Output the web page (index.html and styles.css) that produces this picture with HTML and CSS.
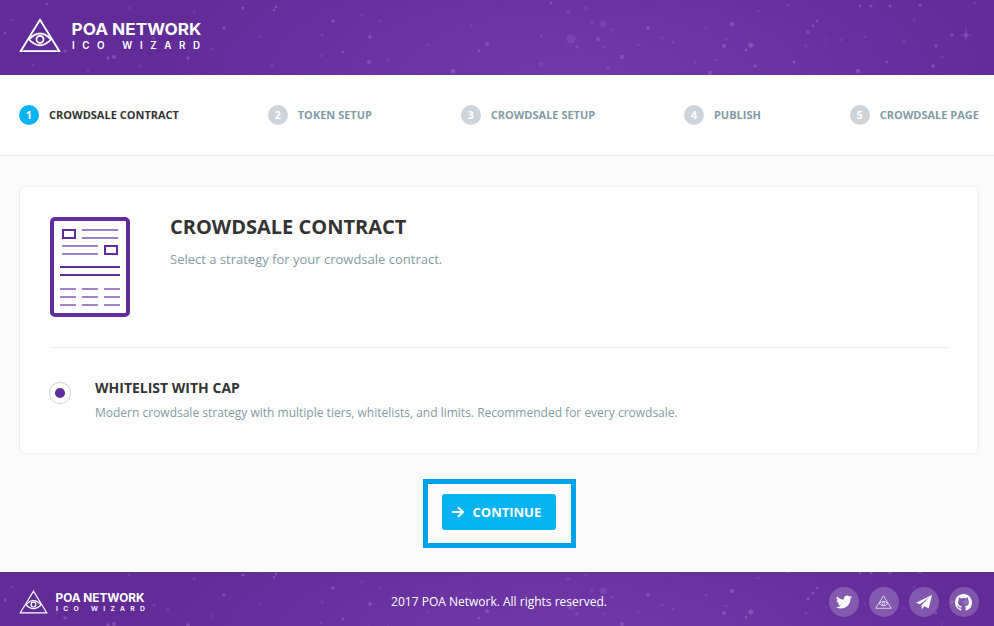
FILE: index.html
```
<!DOCTYPE html>
<html lang="en">
<head>
<meta charset="utf-8">
<title>POA Network ICO Wizard</title>
<link rel="stylesheet" href="styles.css">
</head>
<body>
<svg class="defs" width="0" height="0" aria-hidden="true">
  <symbol id="eye" viewBox="0 0 42 35">
    <g fill="none" stroke="#fff" stroke-width="1.800">
      <path d="M21 1.800 40.300 33.200H1.700Z"/>
      <path d="M10 21.500Q21 9.500 32 21.500Q21 33 10 21.500Z"/>
      <circle cx="21" cy="21.300" r="3.500"/>
    </g>
  </symbol>
  <symbol id="stars" viewBox="0 0 994 75">
    <g fill="#b58add">
      <g opacity=".34">
        <circle cx="47" cy="4" r="1.300"/><circle cx="65" cy="51" r="1.800"/><circle cx="108" cy="58" r="1.700"/><circle cx="114" cy="57" r="2"/><circle cx="188" cy="58" r="1.800"/><circle cx="224" cy="28" r="1.500"/><circle cx="243" cy="8" r="1.600"/><circle cx="5" cy="33" r="1.400"/><circle cx="276" cy="7" r="1.500"/><circle cx="274" cy="10" r="1.200"/><circle cx="333" cy="21" r="1.800"/><circle cx="370" cy="37" r="1.800"/><circle cx="369" cy="62" r="1.900"/><circle cx="343" cy="52" r="1.500"/><circle cx="487" cy="44" r="2"/><circle cx="479" cy="51" r="1.400"/><circle cx="453" cy="71" r="2.300"/><circle cx="551" cy="3" r="1.500"/><circle cx="598" cy="39" r="1.900"/><circle cx="622" cy="57" r="2"/><circle cx="648" cy="28" r="1.900"/><circle cx="732" cy="24" r="2.200"/><circle cx="751" cy="45" r="2.600"/><circle cx="724" cy="46" r="2"/><circle cx="746" cy="50" r="1.500"/><circle cx="755" cy="66" r="1.700"/><circle cx="710" cy="73" r="2"/><circle cx="808" cy="32" r="1.700"/><circle cx="813" cy="26" r="1.400"/><circle cx="817" cy="21" r="1.400"/><circle cx="858" cy="71" r="2.300"/><circle cx="933" cy="66" r="1.900"/><circle cx="920" cy="5" r="1.500"/><circle cx="871" cy="6" r="1.600"/><circle cx="860" cy="6" r="1.500"/><circle cx="890" cy="6" r="1.600"/><circle cx="794" cy="62" r="1.700"/><circle cx="887" cy="62" r="1.400"/><circle cx="936" cy="46" r="1.500"/><circle cx="952" cy="35" r="1.500"/><circle cx="966" cy="35" r="2.200"/>
        <path d="M966 26l.7 8.300 6.300.7-6.300.7-.7 8.300-.7-8.300-6.300-.7 6.300-.7ZM370 31l.5 5.500 3.500.5-3.500.5-.5 4.500-.5-4.500-3.500-.5 3.500-.5ZM369 56l.5 5.500 3.500.5-3.500.5-.5 4.500-.5-4.500-3.500-.5 3.500-.5Z"/>
      </g>
      <g opacity=".18">
        <circle cx="571" cy="39" r="4.500"/><circle cx="603" cy="24" r="3.500"/><circle cx="568" cy="12" r="2"/><circle cx="586" cy="8" r="1.500"/><circle cx="592" cy="23" r="1.500"/><circle cx="612" cy="30" r="1.500"/><circle cx="577" cy="47" r="2"/><circle cx="604" cy="47" r="1.500"/><circle cx="541" cy="36" r="1.500"/><circle cx="541" cy="64" r="2"/><circle cx="608" cy="68" r="1.800"/><circle cx="638" cy="45" r="1.300"/><circle cx="662" cy="38" r="1.500"/><circle cx="673" cy="42" r="1.300"/><circle cx="695" cy="62" r="1.500"/><circle cx="716" cy="60" r="1.300"/><circle cx="706" cy="28" r="1.400"/><circle cx="726" cy="39" r="1.600"/><circle cx="788" cy="5" r="1.500"/><circle cx="758" cy="11" r="1.300"/><circle cx="806" cy="46" r="1.500"/><circle cx="826" cy="40" r="1.300"/><circle cx="841" cy="40" r="1.300"/><circle cx="865" cy="37" r="1.300"/><circle cx="904" cy="41" r="1.500"/><circle cx="914" cy="20" r="1.400"/><circle cx="975" cy="3" r="1.300"/><circle cx="942" cy="57" r="1.300"/><circle cx="388" cy="60" r="1.700"/><circle cx="322" cy="35" r="1.400"/><circle cx="362" cy="15" r="1.400"/><circle cx="380" cy="21" r="1.400"/><circle cx="428" cy="45" r="1.400"/><circle cx="471" cy="26" r="1.400"/><circle cx="321" cy="56" r="1.300"/><circle cx="272" cy="65" r="1.500"/><circle cx="260" cy="37" r="1.300"/><circle cx="75" cy="28" r="1.400"/><circle cx="154" cy="38" r="1.500"/><circle cx="168" cy="43" r="1.500"/><circle cx="57" cy="46" r="1.300"/><circle cx="12" cy="20" r="1.300"/><circle cx="129" cy="8" r="1.300"/><circle cx="194" cy="12" r="1.400"/><circle cx="212" cy="49" r="1.300"/><circle cx="140" cy="66" r="1.400"/><circle cx="33" cy="65" r="1.400"/><circle cx="88" cy="70" r="1.400"/>
      </g>
    </g>
  </symbol>
</svg>

<header class="space header">
  <svg class="stars" width="994" height="75"><use href="#stars"/></svg>
  <a class="logo">
    <svg width="42" height="35"><use href="#eye"/></svg>
    <svg class="wordmark" width="132" height="35">
      <text class="name" x="0.500" y="16.500" font-size="16.500" textLength="130" lengthAdjust="spacingAndGlyphs">POA NETWORK</text>
      <text class="sub" x="1" y="30.500" font-size="9.800" textLength="128">ICO WIZARD</text>
    </svg>
  </a>
</header>

<nav class="steps-bar">
  <ol class="steps">
    <li class="step active"><span class="num">1</span><span>CROWDSALE CONTRACT</span></li>
    <li class="step"><span class="num">2</span><span>TOKEN SETUP</span></li>
    <li class="step"><span class="num">3</span><span>CROWDSALE SETUP</span></li>
    <li class="step"><span class="num">4</span><span>PUBLISH</span></li>
    <li class="step"><span class="num">5</span><span>CROWDSALE PAGE</span></li>
  </ol>
</nav>

<main>
  <section class="card">
    <div class="intro">
      <svg width="80" height="100" viewBox="0 0 80 100" fill="none">
        <rect x="2" y="2" width="76" height="96" rx="3" stroke="#632c9c" stroke-width="4"/>
        <path d="M13 13H25V21H13ZM55 29H67V37H55ZM10 50H70M10 58H70" stroke="#632c9c" stroke-width="2"/>
        <path d="M32 13H68M32 21H68M12 29H48M12 37H48M10 72H26M32 72H48M54 72H70M10 80H26M32 80H48M54 80H70M10 88H26M32 88H48M54 88H70" stroke="#a280c8" stroke-width="2"/>
      </svg>
      <div>
        <h1>CROWDSALE CONTRACT</h1>
        <p class="lead">Select a strategy for your crowdsale contract.</p>
      </div>
    </div>
    <label class="option">
      <span class="radio"></span>
      <span>
        <strong>WHITELIST WITH CAP</strong>
        <span class="desc">Modern crowdsale strategy with multiple tiers, whitelists, and limits. Recommended for every crowdsale.</span>
      </span>
    </label>
  </section>
  <div class="highlight">
    <a class="button">
      <svg width="12" height="12" viewBox="0 0 12 12" fill="none" stroke="#fff" stroke-width="2"><path d="M0 6H11M6 1.200 11 6 6 10.800"/></svg>
      <span>CONTINUE</span>
    </a>
  </div>
</main>

<footer class="space footer">
  <svg class="stars" width="994" height="75"><use href="#stars"/></svg>
  <a class="logo">
    <svg width="29" height="24"><use href="#eye"/></svg>
    <svg class="wordmark" width="92" height="24">
      <text class="name" x="0.500" y="12.300" font-size="11.300" textLength="89" lengthAdjust="spacingAndGlyphs">POA NETWORK</text>
      <text class="sub" x="1" y="21.300" font-size="6.800" textLength="89">ICO WIZARD</text>
    </svg>
  </a>
  <p class="rights">2017 POA Network. All rights reserved.</p>
  <div class="social">
    <a><svg width="16" height="14" viewBox="0 2 24 20" fill="#fff"><path d="M24 4.600a10 10 0 0 1-2.800.8 5 5 0 0 0 2.100-2.700 10 10 0 0 1-3.100 1.200 4.900 4.900 0 0 0-8.400 4.500A14 14 0 0 1 1.700 3.200a4.900 4.900 0 0 0 1.500 6.500 5 5 0 0 1-2.200-.6 4.900 4.900 0 0 0 3.900 4.900 5 5 0 0 1-2.200.1 4.900 4.900 0 0 0 4.600 3.400A10 10 0 0 1 0 19.500a14 14 0 0 0 21.500-12.400A10 10 0 0 0 24 4.600Z"/></svg></a>
    <a><svg width="17" height="14"><use href="#eye"/></svg></a>
    <a><svg width="16" height="15" viewBox="0 0 16 15" fill="#fff"><path d="M16 0 0 7.700l3.900 1.600L13.500 2 5.700 10v4.500l2.400-3.200 4.600 1.900Z"/></svg></a>
    <a><svg width="17" height="17" viewBox="0 0 16 16" fill="#fff"><path d="M8 0C3.580 0 0 3.580 0 8c0 3.540 2.290 6.530 5.470 7.590.4.070.55-.17.55-.38 0-.19-.01-.82-.01-1.490-2.010.37-2.530-.49-2.690-.94-.09-.23-.48-.94-.82-1.130-.28-.15-.68-.52-.01-.53.63-.01 1.080.58 1.230.82.72 1.210 1.870.87 2.330.66.07-.52.28-.87.51-1.070-1.780-.2-3.640-.89-3.640-3.950 0-.87.31-1.590.82-2.150-.08-.2-.36-1.020.08-2.120 0 0 .67-.21 2.200.82A7.700 7.700 0 0 1 8 3.860c.68 0 1.360.09 2 .27 1.530-1.040 2.200-.82 2.200-.82.44 1.100.16 1.920.08 2.120.51.56.82 1.270.82 2.150 0 3.070-1.870 3.750-3.650 3.950.29.25.54.73.54 1.480 0 1.070-.01 1.930-.01 2.200 0 .21.15.46.55.38A8 8 0 0 0 16 8c0-4.420-3.580-8-8-8Z"/></svg></a>
  </div>
</footer>
</body>
</html>
```

FILE: styles.css
```
* { box-sizing: border-box; margin: 0; padding: 0; }
body {
  width: 994px; height: 626px; overflow: hidden;
  display: flex; flex-direction: column;
  background: #fbfbfb;
  font-family: "Open Sans", sans-serif;
  color: #333;
}
.defs { position: absolute; }
.space {
  position: relative; overflow: hidden; flex: none;
  display: flex;
  background: #612c98 radial-gradient(ellipse 420px 150px at 575px 75px, #703aa8, #6a34a2 45%, #612c98);
}
.stars { position: absolute; left: 0; top: 0; }
.header { height: 75px; padding: 18px 19px; }
.logo { position: relative; display: flex; gap: 10px; }
.wordmark { overflow: visible; fill: #fff; font-family: Inter, sans-serif; }
.name { font-weight: 700; }
.sub { font-weight: 600; }

.steps-bar { height: 81px; flex: none; background: #fff; border-bottom: 1px solid #eee; padding: 30px 15px 0 19px; }
.steps { list-style: none; display: flex; justify-content: space-between; }
.step { display: flex; align-items: center; gap: 10px; color: #819ba5; font-size: 11px; font-weight: 700; line-height: 20px; white-space: nowrap; }
.active { color: #333; }
.num { width: 20px; height: 20px; border-radius: 50%; background: #ced5da; color: #fff; text-align: center; }
.active .num { background: #08b3f2; }

main { flex: 1; padding: 30px 15px 0 19px; display: flex; flex-direction: column; align-items: center; }
.card { width: 960px; height: 268px; background: #fff; border: 1px solid #eee; border-radius: 6px; padding: 30px 30px 0; }
.intro { display: flex; gap: 40px; height: 131px; border-bottom: 1px solid #eee; }
h1 { font-size: 20px; line-height: 20px; font-weight: 700; }
.lead { margin-top: 12px; font-size: 13px; line-height: 20px; color: #819ba5; }
.option { display: flex; gap: 24px; padding-top: 30px; }
.radio { width: 22px; height: 22px; margin: 4px 0 0 -1px; border: 1px solid #ced5da; border-radius: 50%; display: grid; place-items: center; }
.radio::after { content: ""; width: 10px; height: 10px; border-radius: 50%; background: #632c9c; }
.option strong { display: block; font-size: 14px; line-height: 20px; }
.desc { display: block; margin-top: 5px; font-size: 12px; line-height: 20px; color: #819ba5; }
.highlight { margin-top: 25px; width: 153px; height: 69px; border: 5px solid #00a2e8; padding: 10px 0 0 14px; }
.button { display: flex; align-items: center; gap: 9px; width: 114px; height: 36px; padding-left: 10px; border-radius: 3px; background: #08b3f2; color: #fff; font-size: 13px; font-weight: 700; }

.footer { height: 54px; padding: 0 15px 0 19px; align-items: center; justify-content: space-between; }
.footer .stars { top: -5px; }
.footer .logo { width: 148px; gap: 7px; padding-top: 6px; }
.rights { position: relative; font-size: 12px; color: #fff; margin-left: 2px; padding-top: 5px; }
.social { position: relative; display: flex; gap: 10px; padding-top: 6px; }
.social a { width: 30px; height: 30px; border-radius: 50%; background: rgba(255,255,255,.2); display: grid; place-items: center; }
```
